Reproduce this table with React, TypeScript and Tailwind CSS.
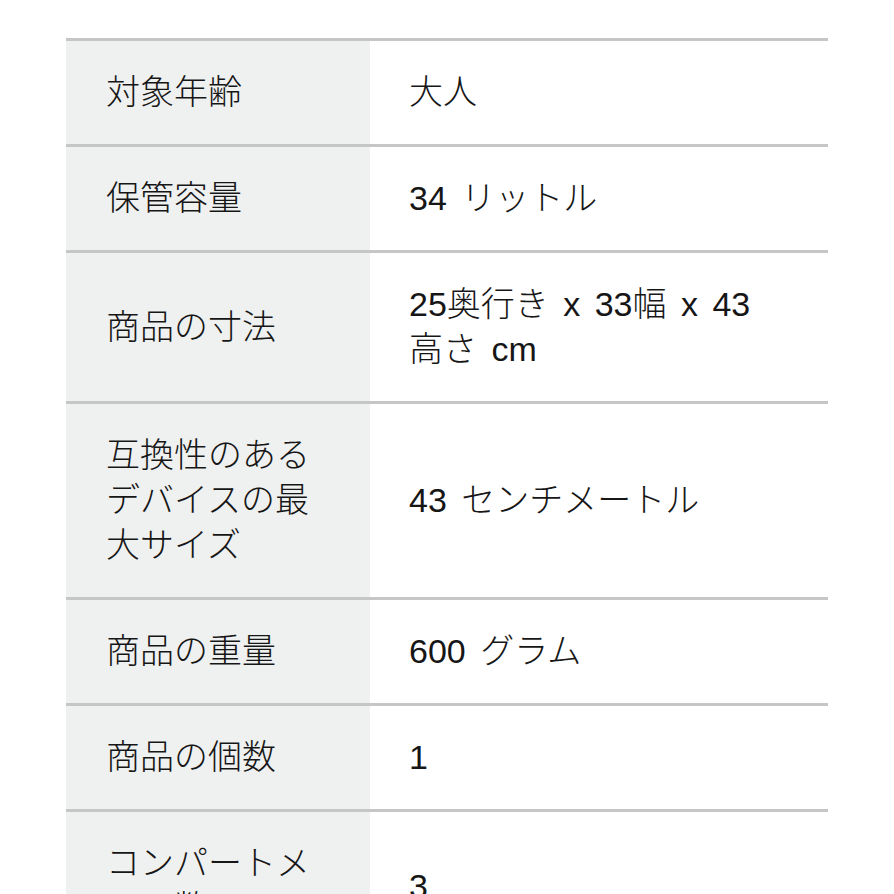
const rows: { label: string; value: string }[] = [
  { label: '対象年齢', value: '大人' },
  { label: '保管容量', value: '34 リットル' },
  { label: '商品の寸法', value: '25奥行き x 33幅 x 43 高さ cm' },
  { label: '互換性のあるデバイスの最大サイズ', value: '43 センチメートル' },
  { label: '商品の重量', value: '600 グラム' },
  { label: '商品の個数', value: '1' },
  { label: 'コンパートメント数', value: '3' },
];

const SpecTable = () => {
  return (
    <div className="ml-[66px] mt-[38px] w-[762px]">
      {rows.map((row) => (
        <div key={row.label} className="grid grid-cols-[304px_1fr] border-t-[3px] border-[#c6c6c6]">
          <div className="bg-[#eff0f0] px-[40px] py-[29px] flex items-center">
            <span className="break-all">{row.label}</span>
          </div>
          <div className="bg-white pl-[39px] pr-[50px] py-[29px] flex items-center">
            <span className="[word-spacing:5px]">{row.value}</span>
          </div>
        </div>
      ))}
      <div className="border-t-[3px] border-[#c6c6c6]" />
    </div>
  );
};

const App = () => {
  return (
    <div
      className="min-h-screen bg-white pb-10 text-[34px] leading-[45px] font-light text-[#161616]"
      style={{ fontFamily: '"Liberation Sans", "Noto Sans CJK JP", sans-serif' }}
    >
      <SpecTable />
    </div>
  );
};

export default App;
